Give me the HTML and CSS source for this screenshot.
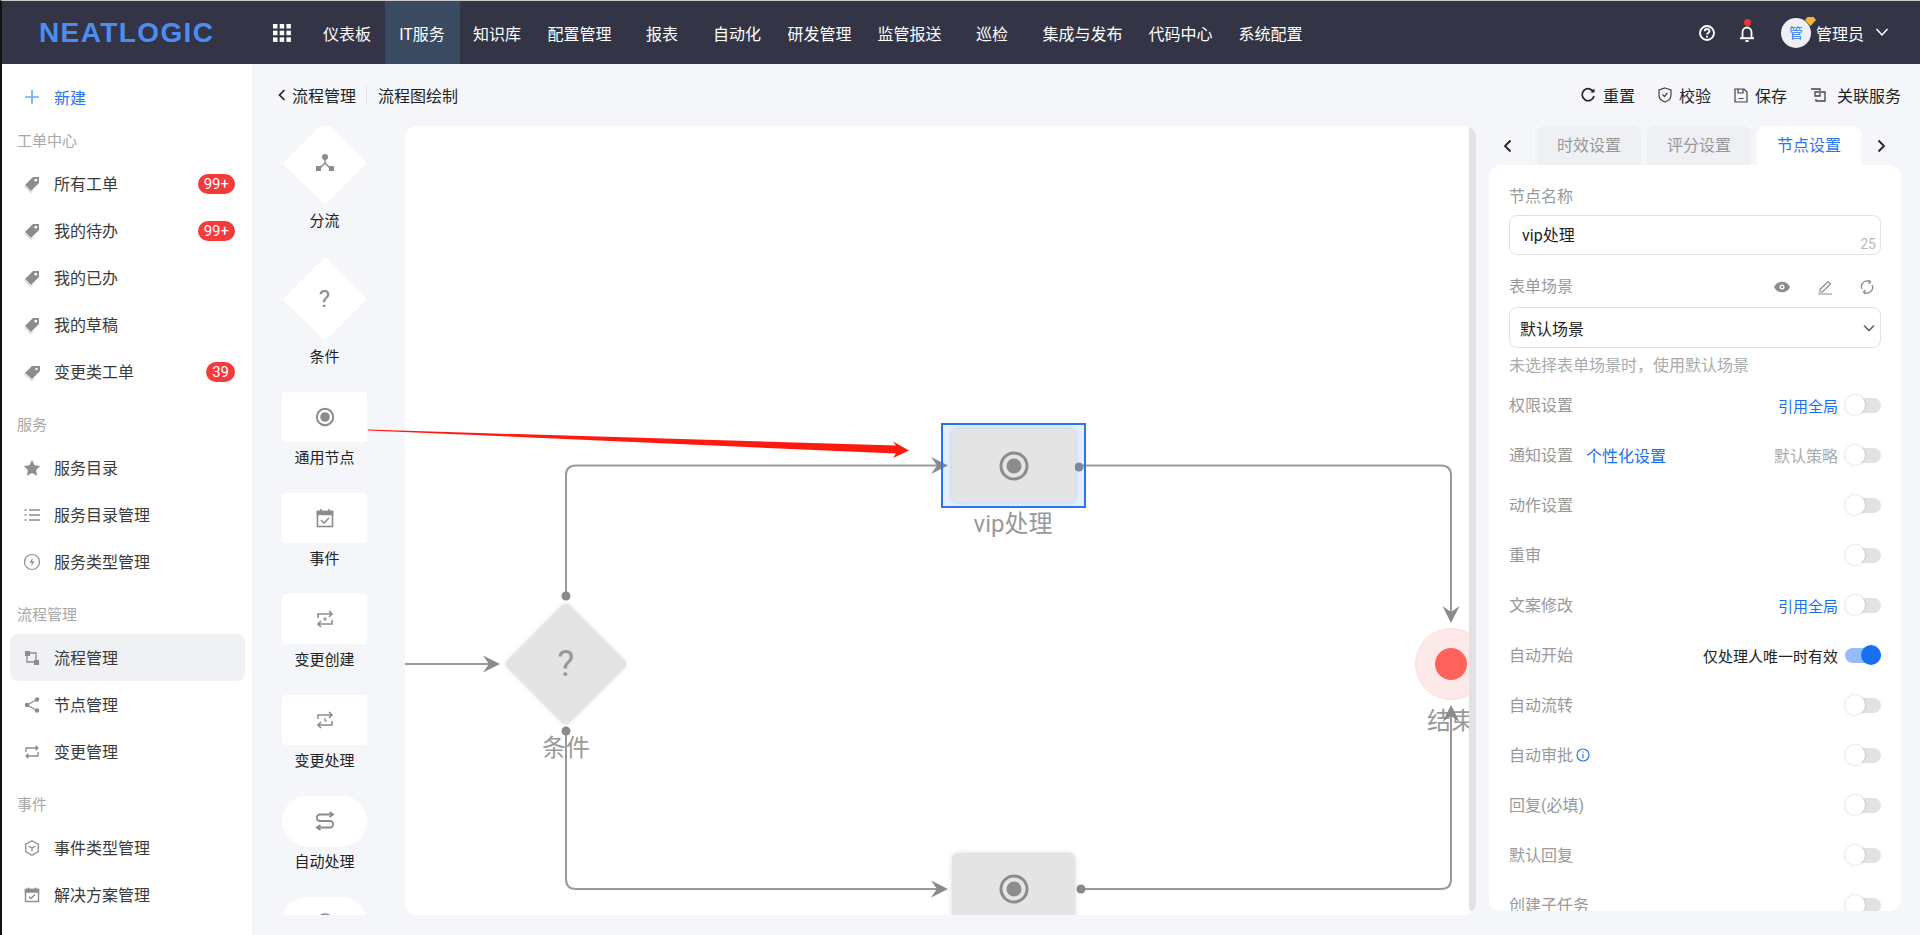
FILE: index.html
```html
<!DOCTYPE html>
<html lang="zh-CN">
<head>
    <meta charset="UTF-8">
    <title>流程图绘制</title>
    <link rel="stylesheet" href="styles.css">
</head>
<body>
<div class="app">
    <!-- Top bar -->
    <header class="topbar">
        <div class="logo">NEATLOGIC</div>
        <svg class="apps" width="18" height="18" viewBox="0 0 18 18" fill="#fff">
            <rect width="4.5" height="4.5"/><rect x="6.7" width="4.5" height="4.5"/><rect x="13.4" width="4.5" height="4.5"/>
            <rect y="6.7" width="4.5" height="4.5"/><rect x="6.7" y="6.7" width="4.5" height="4.5"/><rect x="13.4" y="6.7" width="4.5" height="4.5"/>
            <rect y="13.4" width="4.5" height="4.5"/><rect x="6.7" y="13.4" width="4.5" height="4.5"/><rect x="13.4" y="13.4" width="4.5" height="4.5"/>
        </svg>
        <nav class="nav">
            <a class="nav-item">仪表板</a>
            <a class="nav-item active">IT服务</a>
            <a class="nav-item">知识库</a>
            <a class="nav-item">配置管理</a>
            <a class="nav-item">报表</a>
            <a class="nav-item">自动化</a>
            <a class="nav-item">研发管理</a>
            <a class="nav-item">监管报送</a>
            <a class="nav-item">巡检</a>
            <a class="nav-item">集成与发布</a>
            <a class="nav-item">代码中心</a>
            <a class="nav-item">系统配置</a>
        </nav>
        <div class="top-right">
            <svg width="16" height="16" viewBox="0 0 16 16" fill="none" stroke="#fff" stroke-width="1.9">
                <circle cx="8" cy="8" r="7"/>
                <path d="M5.7 6.3c0-3 4.7-3 4.7 0 0 1.7-2.3 1.7-2.3 3.2"/>
                <path d="M8.1 10.8v1.8"/>
            </svg>
            <div class="bell">
                <svg width="16" height="20" viewBox="0 0 16 20" fill="none" stroke="#fff" stroke-width="1.8">
                    <path d="M3.5 15V9a4.5 4.5 0 0 1 9 0v6"/>
                    <path d="M1 15.2h14" stroke-width="2"/>
                    <path d="M6.5 18h3" stroke-width="2"/>
                </svg>
                <span class="bell-dot"></span>
            </div>
            <div class="avatar">管
                <svg class="avatar-gem" width="11" height="9" viewBox="0 0 11 9"><path d="M2.5 0h6L11 3 5.5 9 0 3z" fill="#fbb638"/></svg>
            </div>
            <span class="user-name">管理员</span>
            <svg width="14" height="9" viewBox="0 0 14 9" fill="none" stroke="#fff" stroke-width="1.5"><path d="M1.5 1L7 7l5.5-6"/></svg>
        </div>
    </header>

    <div class="workspace">
        <!-- Sidebar -->
        <aside class="sidebar">
            <div class="new-btn">
                <svg width="14" height="14" viewBox="0 0 14 14" stroke="#6ea4f5" stroke-width="1.6"><path d="M7 0v14M0 7h14"/></svg>
                <span>新建</span>
            </div>

            <div class="side-title">工单中心</div>
            <div class="side-row">
                <svg class="side-icon" viewBox="0 0 18 18" fill="#8c8c8c"><path d="M10 2h6v6l-8 8-6-6z"/><path d="M1.5 11.5l6.5 6 2-2" fill="none" stroke="#c4c4c4"/><circle cx="12.8" cy="5.2" r="1.4" fill="#fff"/></svg>
                <span class="side-text">所有工单</span><span class="badge">99+</span>
            </div>
            <div class="side-row">
                <svg class="side-icon" viewBox="0 0 18 18" fill="#8c8c8c"><path d="M10 2h6v6l-8 8-6-6z"/><path d="M1.5 11.5l6.5 6 2-2" fill="none" stroke="#c4c4c4"/><circle cx="12.8" cy="5.2" r="1.4" fill="#fff"/></svg>
                <span class="side-text">我的待办</span><span class="badge">99+</span>
            </div>
            <div class="side-row">
                <svg class="side-icon" viewBox="0 0 18 18" fill="#8c8c8c"><path d="M10 2h6v6l-8 8-6-6z"/><path d="M1.5 11.5l6.5 6 2-2" fill="none" stroke="#c4c4c4"/><circle cx="12.8" cy="5.2" r="1.4" fill="#fff"/></svg>
                <span class="side-text">我的已办</span>
            </div>
            <div class="side-row">
                <svg class="side-icon" viewBox="0 0 18 18" fill="#8c8c8c"><path d="M10 2h6v6l-8 8-6-6z"/><path d="M1.5 11.5l6.5 6 2-2" fill="none" stroke="#c4c4c4"/><circle cx="12.8" cy="5.2" r="1.4" fill="#fff"/></svg>
                <span class="side-text">我的草稿</span>
            </div>
            <div class="side-row">
                <svg class="side-icon" viewBox="0 0 18 18" fill="#8c8c8c"><path d="M9 3h8v5l-8 8-7-6z"/><path d="M1.5 11.5l7.5 6 2-2" fill="none" stroke="#c4c4c4"/><circle cx="13.5" cy="6" r="1.3" fill="#fff"/></svg>
                <span class="side-text">变更类工单</span><span class="badge">39</span>
            </div>

            <div class="side-title">服务</div>
            <div class="side-row">
                <svg class="side-icon" viewBox="0 0 18 18" fill="#8c8c8c"><path d="M9 1l2.5 5.2 5.6.8-4 4 1 5.7L9 14l-5.100 2.700 1-5.700-4-4 5.600-.8z"/></svg>
                <span class="side-text">服务目录</span>
            </div>
            <div class="side-row">
                <svg class="side-icon" viewBox="0 0 18 18" stroke="#8c8c8c" stroke-width="1.3"><path d="M1.5 4h2M6 4h11M1.5 9h2M6 9h11M1.5 14h2M6 14h11"/></svg>
                <span class="side-text">服务目录管理</span>
            </div>
            <div class="side-row">
                <svg class="side-icon" viewBox="0 0 18 18" fill="none" stroke="#8c8c8c" stroke-width="1.2"><circle cx="9" cy="9" r="7.5"/><path d="M10 4.5L6.500 9.800H9L8 13.500l3.500-5.300H9z" fill="#8c8c8c" stroke="none"/></svg>
                <span class="side-text">服务类型管理</span>
            </div>

            <div class="side-title">流程管理</div>
            <div class="side-row active">
                <svg class="side-icon" viewBox="0 0 18 18" fill="#8c8c8c"><rect x="2" y="2" width="5" height="5"/><rect x="11" y="11" width="5" height="5"/><path d="M7 4h6v7" fill="none" stroke="#8c8c8c" stroke-width="1.3"/><path d="M4 7v6h7" fill="none" stroke="#8c8c8c" stroke-width="1.3"/></svg>
                <span class="side-text">流程管理</span>
            </div>
            <div class="side-row">
                <svg class="side-icon" viewBox="0 0 18 18" fill="#8c8c8c"><circle cx="14" cy="3.5" r="2.2"/><circle cx="4" cy="9" r="2.2"/><circle cx="14" cy="14.5" r="2.2"/><path d="M14 3.5L4 9l10 5.5" fill="none" stroke="#8c8c8c" stroke-width="1.3"/></svg>
                <span class="side-text">节点管理</span>
            </div>
            <div class="side-row">
                <svg class="side-icon" viewBox="0 0 18 18" fill="none" stroke="#8c8c8c" stroke-width="1.3"><path d="M3 9V5h12M12.5 2.8L15 5l-2.5 2.2"/><path d="M15 9v4H3M5.5 10.8L3 13l2.5 2.2"/></svg>
                <span class="side-text">变更管理</span>
            </div>

            <div class="side-title">事件</div>
            <div class="side-row">
                <svg class="side-icon" viewBox="0 0 18 18" fill="none" stroke="#8c8c8c" stroke-width="1.2"><path d="M9 1.8l6.300 3.600v7.200L9 16.200l-6.300-3.600V5.400z"/><path d="M5.500 7L9 9l3.500-2M9 9v3.500"/></svg>
                <span class="side-text">事件类型管理</span>
            </div>
            <div class="side-row">
                <svg class="side-icon" viewBox="0 0 18 18" fill="none" stroke="#8c8c8c" stroke-width="1.4"><rect x="2.5" y="3.5" width="13" height="12"/><path d="M2.5 3.5h13V6h-13z" fill="#8c8c8c"/><path d="M5.5 1.5v2M12.5 1.5v2"/><path d="M6 10.500l2 2 4-4"/></svg>
                <span class="side-text">解决方案管理</span>
            </div>
        </aside>

        <main class="main">
            <div class="page-head">
                <div class="crumbs">
                    <svg width="8" height="12" viewBox="0 0 8 12" fill="none" stroke="#222" stroke-width="1.7"><path d="M6.5 1l-5 5 5 5"/></svg>
                    <span class="crumb-back">流程管理</span>
                    <span class="crumb-line"></span>
                    <span>流程图绘制</span>
                </div>
                <div class="actions">
                    <span class="action">
                        <svg width="16" height="16" viewBox="0 0 16 16" fill="none" stroke="#222" stroke-width="1.7"><path d="M13.5 5A6 6 0 1 0 14 9"/><path d="M14.5 1.5v4h-4" fill="#222" stroke="none"/></svg>
                        重置
                    </span>
                    <span class="action">
                        <svg width="14" height="16" viewBox="0 0 14 16" fill="none" stroke="#444" stroke-width="1.2"><path d="M7 1l6 2v5c0 3.500-3 6-6 7-3-1-6-3.500-6-7V3z"/><path d="M4.5 7.5l2 2 3-3.500"/></svg>
                        校验
                    </span>
                    <span class="action">
                        <svg width="14" height="15" viewBox="0 0 14 15" fill="none" stroke="#444" stroke-width="1.2"><path d="M1 1h9l3 3v10H1z"/><path d="M4 1v4h5V1M4.5 10.500h5"/></svg>
                        保存
                    </span>
                    <span class="action action-link">
                        <svg width="16" height="14" viewBox="0 0 16 14" fill="none" stroke="#444" stroke-width="1.3"><path d="M1 1h9v7H5V4h4M11 4h4v9H6v-2"/></svg>
                        关联服务
                    </span>
                </div>
            </div>

            <div class="board">
                <!-- Node palette -->
                <div class="stencil">
                    <div class="stencil-list">
                        <div class="stencil-item">
                            <div class="shape shape-diamond">
                                <svg width="20" height="20" viewBox="0 0 20 20" fill="#8c8c8c"><circle cx="10" cy="4" r="3"/><rect x="1" y="13" width="5" height="5"/><rect x="14" y="13" width="5" height="5"/><path d="M10 4v6l-6 6M10 10l6 6" fill="none" stroke="#8c8c8c" stroke-width="1.5"/></svg>
                            </div>
                            <div class="stencil-label">分流</div>
                        </div>
                        <div class="stencil-item">
                            <div class="shape shape-diamond"><span class="shape-q">?</span></div>
                            <div class="stencil-label">条件</div>
                        </div>
                        <div class="stencil-item">
                            <div class="shape shape-rect">
                                <svg width="20" height="20" viewBox="0 0 20 20"><circle cx="10" cy="10" r="8.2" fill="none" stroke="#8c8c8c" stroke-width="2"/><circle cx="10" cy="10" r="4.8" fill="#8c8c8c"/></svg>
                            </div>
                            <div class="stencil-label">通用节点</div>
                        </div>
                        <div class="stencil-item">
                            <div class="shape shape-rect">
                                <svg width="18" height="20" viewBox="0 0 18 20" fill="none" stroke="#8c8c8c" stroke-width="1.6"><rect x="1.5" y="3.5" width="15" height="15"/><path d="M1.5 3.5h15v3h-15z" fill="#8c8c8c"/><path d="M5 1v3M13 1v3"/><path d="M5 12l3 3 5-5"/></svg>
                            </div>
                            <div class="stencil-label">事件</div>
                        </div>
                        <div class="stencil-item">
                            <div class="shape shape-rect">
                                <svg width="18" height="20" viewBox="0 0 18 20" fill="none" stroke="#8c8c8c" stroke-width="1.6"><path d="M2 9V5h13M13 2l3 3-3 3"/><path d="M16 11v4H3M5 12l-3 3 3 3"/><path d="M9 8v4M7 10h4" stroke-width="1.2"/></svg>
                            </div>
                            <div class="stencil-label">变更创建</div>
                        </div>
                        <div class="stencil-item">
                            <div class="shape shape-rect">
                                <svg width="18" height="20" viewBox="0 0 18 20" fill="none" stroke="#8c8c8c" stroke-width="1.6"><path d="M2 9V5h13M13 2l3 3-3 3"/><path d="M16 11v4H3M5 12l-3 3 3 3"/><path d="M9 8v3h2" stroke-width="1.2"/></svg>
                            </div>
                            <div class="stencil-label">变更处理</div>
                        </div>
                        <div class="stencil-item">
                            <div class="shape shape-pill">
                                <svg width="20" height="20" viewBox="0 0 20 20" fill="none" stroke="#8c8c8c" stroke-width="1.8"><path d="M18 3.5H5a3 3 0 0 0 0 6.500h10a3 3 0 0 1 0 6.500H2"/><path d="M14.5 1L18 3.500 14.500 6M5.500 14L2 16.500 5.500 19"/></svg>
                            </div>
                            <div class="stencil-label">自动处理</div>
                        </div>
                        <div class="stencil-item">
                            <div class="shape shape-pill">
                                <svg width="20" height="20" viewBox="0 0 20 20" fill="none" stroke="#8c8c8c" stroke-width="1.6"><circle cx="10" cy="10" r="8"/></svg>
                            </div>
                        </div>
                    </div>
                </div>

                <!-- Flow canvas -->
                <div class="canvas">
                    <div class="canvas-view">
                        <div class="flow-label flow-label-cond">条件</div>
                        <div class="flow-label flow-label-vip">vip处理</div>
                        <div class="flow-label flow-label-end">结束</div>
                        <div class="flow-end"><span class="flow-end-dot"></span></div>

                        <svg class="flow-lines" width="1064" height="789" viewBox="0 0 1064 789" fill="none">
                            <defs>
                                <path id="head" d="M0 0L-17-8.500-11 0-17 8.500Z" fill="#8a8a8a"/>
                            </defs>
                            <g stroke="#9a9a9a" stroke-width="2">
                                <path d="M0 538H90"/>
                                <path d="M161 470V349Q161 339.500 171 339.500H538"/>
                                <path d="M161 605V753Q161 763 171 763H538"/>
                                <path d="M676 339.500H1036Q1046 339.500 1046 349.500V492"/>
                                <path d="M676 763H1036Q1046 763 1046 753V584"/>
                            </g>
                            <use href="#head" x="95" y="538"/>
                            <use href="#head" x="543" y="339.500"/>
                            <use href="#head" x="543" y="763"/>
                            <use href="#head" transform="translate(1046 497) rotate(90)"/>
                            <use href="#head" transform="translate(1046 579) rotate(-90)"/>
                            <g fill="#8a8a8a">
                                <circle cx="161" cy="470" r="4.5"/>
                                <circle cx="161" cy="605" r="4.5"/>
                                <circle cx="676" cy="763" r="4.5"/>
                            </g>
                        </svg>

                        <div class="flow-diamond"><span class="flow-q">?</span></div>

                        <div class="flow-selected">
                            <svg class="flow-sel-dot" width="10" height="10" viewBox="0 0 10 10"><circle cx="5" cy="5" r="4.5" fill="#7f8a9c"/></svg>
                        </div>
                        <div class="flow-node flow-node-sel">
                            <svg width="30" height="30" viewBox="0 0 30 30"><circle cx="15" cy="15" r="13" fill="none" stroke="#8c8c8c" stroke-width="3"/><circle cx="15" cy="15" r="7.5" fill="#8c8c8c"/></svg>
                        </div>
                        <div class="flow-node flow-node-low">
                            <svg width="30" height="30" viewBox="0 0 30 30"><circle cx="15" cy="15" r="13" fill="none" stroke="#8c8c8c" stroke-width="3"/><circle cx="15" cy="15" r="7.5" fill="#8c8c8c"/></svg>
                        </div>
                    </div>
                    <div class="canvas-scroll"></div>
                </div>

                <!-- Property panel -->
                <div class="props">
                    <div class="tabs">
                        <div class="tab-arrow tab-arrow-left">
                            <svg width="9" height="14" viewBox="0 0 9 14" fill="none" stroke="#222" stroke-width="1.8"><path d="M7.5 1.5L2 7l5.5 5.500"/></svg>
                        </div>
                        <div class="tab">时效设置</div>
                        <div class="tab">评分设置</div>
                        <div class="tab active">节点设置</div>
                        <div class="tab-arrow tab-arrow-right">
                            <svg width="9" height="14" viewBox="0 0 9 14" fill="none" stroke="#222" stroke-width="1.8"><path d="M1.5 1.5L7 7l-5.500 5.500"/></svg>
                        </div>
                    </div>
                    <div class="panel">
                        <div class="field-label">节点名称</div>
                        <div class="field-input">vip处理<span class="field-count">25</span></div>

                        <div class="field-head">
                            <div class="field-label">表单场景</div>
                            <div class="field-tools">
                                <svg width="16" height="12" viewBox="0 0 16 12"><path d="M0 6c3-7 13-7 16 0-3 7-13 7-16 0z" fill="#8c8c8c"/><circle cx="8" cy="6" r="2.5" fill="#fff"/><circle cx="8" cy="6" r="1.2" fill="#8c8c8c"/></svg>
                                <svg width="16" height="16" viewBox="0 0 16 16" fill="none" stroke="#8c8c8c" stroke-width="1.2"><path d="M3 10.500l8-8L13.500 5l-8 8H3zM1 15h14"/></svg>
                                <svg width="14" height="16" viewBox="0 0 14 16" fill="none" stroke="#8c8c8c" stroke-width="1.3"><path d="M2 10A5.500 5.500 0 0 1 10 3M12 6a5.500 5.500 0 0 1-8 7"/><path d="M8.500 1l2 2-2 2M5.500 11l-2 2 2 2"/></svg>
                            </div>
                        </div>
                        <div class="field-select">
                            <span>默认场景</span>
                            <svg width="12" height="8" viewBox="0 0 12 8" fill="none" stroke="#666" stroke-width="1.7"><path d="M1 1.500l5 5 5-5"/></svg>
                        </div>
                        <div class="field-hint">未选择表单场景时，使用默认场景</div>

                        <div class="prop-row">
                            <span class="prop-name">权限设置</span>
                            <a class="prop-link">引用全局</a><span class="switch"></span>
                        </div>
                        <div class="prop-row">
                            <span class="prop-name">通知设置</span>
                            <a class="prop-link prop-link-left">个性化设置</a>
                            <span class="prop-note">默认策略</span><span class="switch"></span>
                        </div>
                        <div class="prop-row"><span class="prop-name">动作设置</span><span class="switch"></span></div>
                        <div class="prop-row"><span class="prop-name">重审</span><span class="switch"></span></div>
                        <div class="prop-row">
                            <span class="prop-name">文案修改</span>
                            <a class="prop-link">引用全局</a><span class="switch"></span>
                        </div>
                        <div class="prop-row">
                            <span class="prop-name">自动开始</span>
                            <span class="prop-value">仅处理人唯一时有效</span><span class="switch on"></span>
                        </div>
                        <div class="prop-row"><span class="prop-name">自动流转</span><span class="switch"></span></div>
                        <div class="prop-row">
                            <span class="prop-name">自动审批</span>
                            <svg class="prop-info" width="14" height="14" viewBox="0 0 14 14" fill="none" stroke="#2a75ee" stroke-width="1.2"><circle cx="7" cy="7" r="6"/><path d="M7 6v4.200M7 3.500v1.300"/></svg>
                            <span class="switch"></span>
                        </div>
                        <div class="prop-row"><span class="prop-name">回复(必填)</span><span class="switch"></span></div>
                        <div class="prop-row"><span class="prop-name">默认回复</span><span class="switch"></span></div>
                        <div class="prop-row"><span class="prop-name">创建子任务</span><span class="switch"></span></div>
                    </div>
                </div>
            </div>
        </main>
    </div>

    <!-- Annotation over the page -->
    <svg class="annotation" width="560" height="50" viewBox="0 0 560 50">
        <path d="M8 9.600L536 25.500 533 21.500 549 30.500 533 38 536 33.500 8 10.400Z" fill="#ff1a10"/>
    </svg>
</div>
</body>
</html>
```

FILE: styles.css
```css
* {
    margin: 0;
    padding: 0;
    box-sizing: border-box;
}

html, body {
    height: 100%;
    overflow: hidden;
}

body {
    font-family: Roboto, "Noto Sans CJK SC", sans-serif;
    font-size: 16px;
    color: #222;
    background: #f4f6fa;
}

.app {
    position: relative;
    height: 935px;
    display: flex;
    flex-direction: column;
    border-top: 1px solid #c9c9c9;
    border-left: 2px solid #111;
    overflow: hidden;
}

/* Top bar */
.topbar {
    height: 63px;
    flex: none;
    display: flex;
    align-items: center;
    background: #333546;
    color: #fff;
}

.logo {
    width: 174px;
    margin-left: 37px;
    font-family: "Liberation Sans", sans-serif;
    font-size: 28px;
    font-weight: 700;
    letter-spacing: 1.4px;
    color: #4d8df2;
    white-space: nowrap;
}

.apps {
    margin-left: 60px;
}

.nav {
    display: flex;
    height: 100%;
    margin-left: 18.5px;
}

.nav-item {
    min-width: 75px;
    padding: 0 13px;
    display: flex;
    align-items: center;
    justify-content: center;
    white-space: nowrap;
}

.nav-item.active {
    background: #3a4a60;
}

.top-right {
    margin-left: auto;
    margin-right: 31px;
    display: flex;
    align-items: center;
}

.bell {
    position: relative;
    display: flex;
    margin-left: 24px;
}

.bell-dot {
    position: absolute;
    top: -4px;
    left: 5px;
    width: 7px;
    height: 7px;
    border-radius: 50%;
    background: #f0323c;
}

.avatar {
    position: relative;
    width: 30px;
    height: 30px;
    margin-left: 26px;
    border-radius: 50%;
    background: #eef0f5;
    color: #2a7cf0;
    font-size: 14px;
    line-height: 30px;
    text-align: center;
}

.avatar-gem {
    position: absolute;
    top: -1px;
    right: -5px;
}

.user-name {
    margin: 0 11px 0 5px;
}

/* Sidebar */
.workspace {
    flex: 1;
    display: flex;
    min-height: 0;
}

.sidebar {
    width: 250px;
    flex: none;
    background: #fff;
    overflow: hidden;
}

.new-btn {
    height: 34px;
    margin: 16px 0 6px;
    padding-left: 23px;
    display: flex;
    align-items: center;
    gap: 15px;
    color: #2a75ee;
}

.side-title {
    height: 40px;
    margin-top: 9px;
    padding-left: 15px;
    font-size: 15px;
    line-height: 42px;
    color: #a8a8a8;
}

.new-btn + .side-title {
    margin-top: 0;
}

.side-row {
    height: 47px;
    margin: 0 7px 0 8px;
    padding: 0 10px 0 13px;
    display: flex;
    align-items: center;
    border-radius: 8px;
    color: #3a3a3a;
}

.side-row.active {
    background: #f0f1f5;
}

.side-icon {
    width: 18px;
    height: 18px;
    flex: none;
}

.side-text {
    margin-left: 13px;
    padding-bottom: 2px;
    flex: 1;
}

.badge {
    height: 20px;
    padding: 0 6px;
    border-radius: 10px;
    background: #f33b3b;
    color: #fff;
    font-size: 15px;
    line-height: 20px;
}

/* Main area */
.main {
    flex: 1;
    min-width: 0;
    display: flex;
    flex-direction: column;
}

.page-head {
    height: 62px;
    flex: none;
    padding: 0 19px 0 26px;
    display: flex;
    align-items: center;
    justify-content: space-between;
}

.crumbs {
    display: flex;
    align-items: center;
}

.crumb-back {
    margin-left: 6px;
}

.crumb-line {
    width: 1px;
    height: 18px;
    margin: 0 11px 0 10px;
    background: #e2e4ea;
}

.actions {
    display: flex;
    align-items: center;
    gap: 23px;
}

.action {
    display: flex;
    align-items: center;
    gap: 7px;
}

.action-link {
    gap: 11px;
}

.board {
    height: 789px;
    flex: none;
    display: flex;
}

/* Node palette */
.stencil {
    width: 85px;
    flex: none;
    margin-left: 30px;
    overflow: hidden;
}

.stencil-list {
    margin-top: -6px;
}

.stencil-item {
    margin-bottom: 20px;
}

.stencil-label {
    height: 31px;
    font-size: 15px;
    line-height: 33px;
    text-align: center;
    color: #222;
}

.shape {
    position: relative;
    display: flex;
    align-items: center;
    justify-content: center;
    background: #fff;
}

.shape svg,
.shape-q {
    position: relative;
}

.shape-rect {
    height: 50px;
    border-radius: 4px;
}

.shape-pill {
    height: 50px;
    border-radius: 25px;
}

.shape-diamond {
    height: 85px;
    background: none;
}

.shape-diamond::before {
    content: "";
    position: absolute;
    left: 12.5px;
    top: 12.5px;
    width: 60px;
    height: 60px;
    border-radius: 4px;
    background: #fff;
    transform: rotate(45deg);
}

.shape-q {
    font-size: 24px;
    color: #8c8c8c;
}

/* Flow canvas */
.canvas {
    position: relative;
    width: 1071px;
    flex: none;
    margin-left: 38px;
    border-radius: 12px;
    background: #fff;
    overflow: hidden;
}

.canvas-view {
    position: relative;
    width: 1064px;
    height: 100%;
    overflow: hidden;
}

.canvas-scroll {
    position: absolute;
    top: 0;
    right: 0;
    bottom: 4px;
    width: 7px;
    border-radius: 4px;
    background: #e2e2e2;
}

.flow-lines {
    position: absolute;
    left: 0;
    top: 0;
}

.flow-label {
    position: absolute;
    transform: translate(-50%, -50%);
    font-size: 24px;
    line-height: 32px;
    color: #999;
    white-space: nowrap;
}

.flow-label-cond {
    left: 161px;
    top: 622px;
}

.flow-label-vip {
    left: 608px;
    top: 398px;
}

.flow-label-end {
    left: 1046px;
    top: 595px;
}

.flow-end {
    position: absolute;
    left: 1010px;
    top: 502px;
    width: 72px;
    height: 72px;
    display: flex;
    align-items: center;
    justify-content: center;
    border: 1px solid #fbdcdc;
    border-radius: 50%;
    background: #fde9e9;
}

.flow-end-dot {
    width: 32px;
    height: 32px;
    border-radius: 50%;
    background: #ff625a;
}

.flow-diamond {
    position: absolute;
    left: 117px;
    top: 494px;
    width: 88px;
    height: 88px;
    display: flex;
    align-items: center;
    justify-content: center;
    border-radius: 5px;
    background: #e4e4e4;
    box-shadow: 0 0 4px rgba(0, 0, 0, 0.12);
    transform: rotate(45deg);
}

.flow-q {
    font-size: 36px;
    line-height: 1;
    color: #999;
    transform: rotate(-45deg);
}

.flow-selected {
    position: absolute;
    left: 536px;
    top: 297px;
    width: 145px;
    height: 85px;
    border: 2px solid #2a75ee;
    background: rgba(42, 117, 238, 0.12);
}

.flow-sel-dot {
    position: absolute;
    right: 0;
    top: 36.5px;
}

.flow-node {
    position: absolute;
    left: 547px;
    width: 123px;
    height: 73px;
    display: flex;
    align-items: center;
    justify-content: center;
    border-radius: 6px;
    background: #e4e4e4;
}

.flow-node-sel {
    top: 303px;
    box-shadow: 0 0 5px rgba(90, 110, 160, 0.3);
}

.flow-node-low {
    top: 726.5px;
    box-shadow: 0 0 5px rgba(0, 0, 0, 0.15);
}

/* Property panel */
.props {
    width: 412px;
    flex: none;
    margin-left: 13px;
    display: flex;
    flex-direction: column;
    height: 785px;
}

.tabs {
    height: 39px;
    flex: none;
    display: flex;
    gap: 6px;
}

.tab-arrow {
    width: 40px;
    flex: none;
    display: flex;
    align-items: center;
    justify-content: center;
}

.tab-arrow-left {
    width: 42px;
    padding-right: 4px;
    border-right: 1px solid #eef0f4;
}

.tab-arrow-right {
    margin-left: -6px;
}

.tab {
    width: 104px;
    flex: none;
    border-radius: 8px 8px 0 0;
    background: #eef0f4;
    color: #999;
    line-height: 39px;
    text-align: center;
}

.tab.active {
    background: #fff;
    color: #2a75ee;
}

.panel {
    flex: 1;
    min-height: 0;
    padding: 20px 20px 0;
    border-radius: 12px;
    background: #fff;
    overflow: hidden;
}

.field-label {
    height: 24px;
    line-height: 24px;
    color: #999;
}

.field-input {
    position: relative;
    height: 40px;
    margin-top: 6px;
    padding-left: 12px;
    border: 1px solid #e2e2e2;
    border-radius: 8px;
    line-height: 40px;
}

.field-count {
    position: absolute;
    right: 4px;
    bottom: 0;
    font-size: 14px;
    line-height: 20px;
    color: #bbb;
}

.field-head {
    margin-top: 20px;
    display: flex;
    align-items: center;
    justify-content: space-between;
}

.field-tools {
    display: flex;
    align-items: center;
    gap: 27px;
    padding-right: 7px;
}

.field-select {
    height: 41px;
    margin-top: 8px;
    padding: 0 5px 0 10px;
    display: flex;
    align-items: center;
    justify-content: space-between;
    border: 1px solid #e2e2e2;
    border-radius: 8px;
}

.field-hint {
    height: 24px;
    margin-top: 6px;
    margin-bottom: 2px;
    line-height: 24px;
    color: #aaa;
}

.prop-row {
    height: 50px;
    display: flex;
    align-items: center;
}

.prop-name {
    padding-bottom: 2px;
    color: #999;
}

.prop-link {
    margin-left: auto;
    font-size: 15px;
    color: #1a6ff0;
}

.prop-link-left {
    margin-left: 13px;
    font-size: 16px;
}

.prop-note {
    margin-left: auto;
    color: #aaa;
}

.prop-value {
    margin-left: auto;
    font-size: 15px;
    color: #222;
}

.prop-info {
    margin-left: 3px;
}

.switch {
    position: relative;
    width: 36px;
    height: 15px;
    flex: none;
    margin-left: 7px;
    border-radius: 8px;
    background: #e2e2e2;
}

.prop-name + .switch,
.prop-info + .switch {
    margin-left: auto;
}

.switch::after {
    content: "";
    position: absolute;
    left: 0;
    top: -3px;
    width: 20px;
    height: 20px;
    border-radius: 50%;
    background: #fff;
    box-shadow: 0 0 3px rgba(0, 0, 0, 0.2);
}

.switch.on {
    background: #94bcf8;
}

.switch.on::after {
    left: 16px;
    background: #1670f0;
    box-shadow: none;
}

/* Red arrow drawn over the page */
.annotation {
    position: absolute;
    left: 358px;
    top: 419px;
    pointer-events: none;
}
```
